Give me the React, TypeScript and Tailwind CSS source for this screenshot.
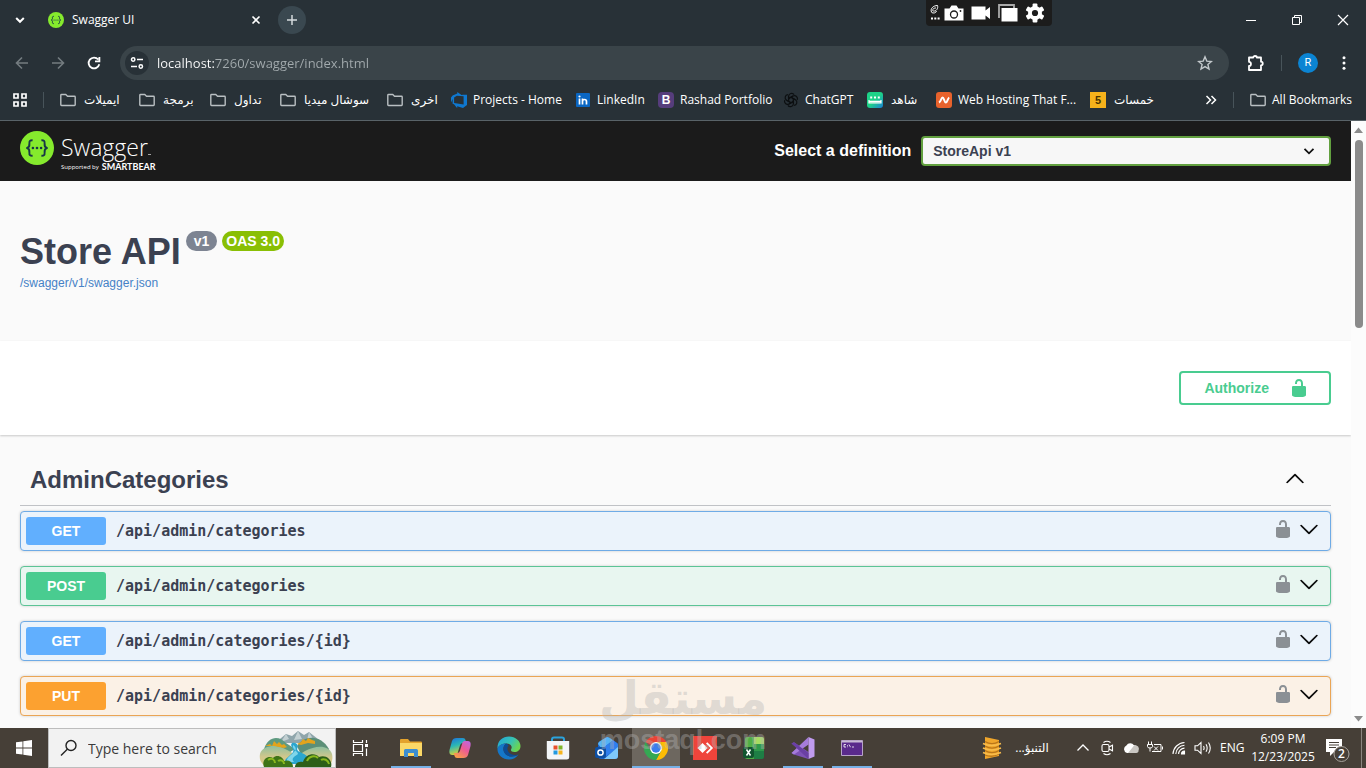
import React from "react";

const UNLOCKED =
  "M15.8 8H14V5.6C14 2.703 12.665 1 10 1 7.334 1 6 2.703 6 5.6V6h2v-.801C8 3.754 8.797 3 10 3c1.203 0 2 .754 2 2.199V8H4c-.553 0-1 .646-1 1.199V17c0 .549.428 1.139.951 1.307l1.197.387C5.672 18.861 6.55 19 7.1 19h5.8c.549 0 1.428-.139 1.951-.307l1.196-.387c.524-.167.953-.757.953-1.306V9.199C17 8.646 16.352 8 15.8 8z";
const ARROW_UP =
  "M17.418 14.908C17.69 15.176 18.127 15.176 18.397 14.908 18.667 14.64 18.668 14.207 18.397 13.939L10.489 6.109C10.219 5.841 9.782 5.841 9.51 6.109L1.602 13.939C1.332 14.207 1.332 14.64 1.602 14.908 1.873 15.176 2.311 15.176 2.581 14.908L10 7.767 17.418 14.908Z";
const ARROW_DOWN =
  "M17.418 6.109C17.69 5.841 18.127 5.841 18.397 6.109 18.667 6.377 18.668 6.81 18.397 7.078L10.489 14.908C10.219 15.176 9.782 15.176 9.51 14.908L1.602 7.078C1.332 6.81 1.332 6.377 1.602 6.109 1.873 5.841 2.311 5.841 2.581 6.109L10 13.25 17.418 6.109Z";

function Unlock() {
  return (
    <svg viewBox="0 0 20 20" className="size-5" fill="currentColor" aria-hidden="true">
      <path d={UNLOCKED} />
    </svg>
  );
}

function Arrow({ d }: { d: string }) {
  return (
    <svg viewBox="0 0 20 20" className="size-5" fill="#000" stroke="#000" strokeWidth="0.2" aria-hidden="true">
      <path d={d} />
    </svg>
  );
}

/* ---------- browser chrome ---------- */

function SwaggerMark({ className }: { className: string }) {
  return (
    <svg viewBox="0 0 34 34" className={className} aria-hidden="true">
      <circle cx="17" cy="17" r="17" fill="#85ea2d" />
      <g fill="none" stroke="#173647" strokeWidth="1.9" strokeLinejoin="round">
        <path d="M12.6 9.3c-2.6-.1-3.4.6-3.2 3.2.2 2.6 0 3.9-2.4 4.5 2.4.6 2.6 1.9 2.4 4.5-.2 2.6.6 3.3 3.2 3.2" />
        <path d="M21.4 9.3c2.6-.1 3.4.6 3.2 3.2-.2 2.6 0 3.9 2.4 4.5-2.4.6-2.6 1.9-2.4 4.5.2 2.6-.6 3.3-3.2 3.2" />
      </g>
      <g fill="#173647">
        <circle cx="12.9" cy="17" r="1.300" />
        <circle cx="17" cy="17" r="1.300" />
        <circle cx="21.1" cy="17" r="1.300" />
      </g>
    </svg>
  );
}

function TabStrip() {
  return (
    <div className="flex h-10 items-center pl-3 text-white">
      <button aria-label="Search tabs" className="flex size-4 items-center justify-center">
        <svg viewBox="0 0 16 16" className="size-4" fill="none" stroke="currentColor" strokeWidth="2">
          <path d="M4.200 6l3.800 3.800L11.800 6" />
        </svg>
      </button>
      <div className="ml-5 flex w-[216px] items-center">
        <SwaggerMark className="size-4" />
        <span className="ml-2 flex-1 text-[12px] leading-4">Swagger UI</span>
        <button aria-label="Close tab" className="flex size-4 items-center justify-center">
          <svg viewBox="0 0 16 16" className="size-4" fill="none" stroke="currentColor" strokeWidth="1.600">
            <path d="M4.500 4.500l7 7M11.500 4.500l-7 7" />
          </svg>
        </button>
      </div>
      <button aria-label="New tab" className="ml-[14px] flex size-7 items-center justify-center rounded-full bg-[#3a4850] text-[#d5dadd]">
        <svg viewBox="0 0 16 16" className="size-4" fill="none" stroke="currentColor" strokeWidth="1.500">
          <path d="M8 3v10M3 8h10" />
        </svg>
      </button>
      <div className="ml-auto flex">
        <button aria-label="Minimize" className="flex w-[46px] items-center justify-center">
          <svg viewBox="0 0 12 12" className="size-3" stroke="currentColor" fill="none">
            <path d="M1 6.500h10" />
          </svg>
        </button>
        <button aria-label="Restore" className="flex w-[46px] items-center justify-center">
          <svg viewBox="0 0 12 12" className="size-3" stroke="currentColor" fill="none">
            <path d="M1.500 3.500h7v7h-7zM3.500 3.500v-2h7v7h-2" />
          </svg>
        </button>
        <button aria-label="Close" className="flex w-[46px] items-center justify-center">
          <svg viewBox="0 0 12 12" className="size-3" stroke="currentColor" strokeWidth="1.200" fill="none">
            <path d="M1 1l10 10M11 1L1 11" />
          </svg>
        </button>
      </div>
    </div>
  );
}

function CaptureBar() {
  return (
    <div className="absolute top-0 right-[314px] flex h-[26px] w-[126px] items-center rounded-b-sm bg-[#1c1c1c] pl-1 text-white">
      <svg viewBox="0 0 10 18" className="h-[18px] w-[10px]" fill="none" stroke="currentColor">
        <path d="M1.500 8C0 5 3 1.500 7.500 1.500c1 3-1.500 6-4 5.500S4 3.500 6 4M1.500 8.500c2 1 4.500.5 5-1.500" />
        <path d="M1 14.500h2M4.300 14.500h2M7.600 14.500h2" strokeWidth="1.800" />
      </svg>
      <svg viewBox="0 0 20 16" className="ml-1 h-4 w-5" fill="#fff">
        <path d="M.5 3.500h5L7.500.5h5l2 3h5v12H.5z" />
        <circle cx="10" cy="9.500" r="3.500" fill="none" stroke="#1c1c1c" strokeWidth="1.300" />
        <circle cx="16.500" cy="6" r=".9" fill="#1c1c1c" />
      </svg>
      <svg viewBox="0 0 20 14" className="ml-[7px] h-[14px] w-5" fill="#fff">
        <path d="M.5.500h14v4l4.500-3.500v12L14.500 9.500v4H.5z" />
      </svg>
      <svg viewBox="0 0 20 18" className="ml-[7px] h-[18px] w-5">
        <path d="M1 14V1h15v3" fill="none" stroke="#aaa" strokeWidth="1.800" />
        <path d="M3.500 4h16V17.500h-16z" fill="#fff" />
      </svg>
      <svg viewBox="0 0 20 20" className="ml-[7px] size-5">
        <g fill="#fff">
          <circle cx="10" cy="10" r="7" />
          <rect x="7.600" y=".5" width="4.800" height="19" rx="1" />
          <rect x="7.600" y=".5" width="4.800" height="19" rx="1" transform="rotate(60 10 10)" />
          <rect x="7.600" y=".5" width="4.800" height="19" rx="1" transform="rotate(120 10 10)" />
        </g>
        <circle cx="10" cy="10" r="3.100" fill="#1c1c1c" />
      </svg>
    </div>
  );
}

function Toolbar() {
  return (
    <div className="mt-[6px] flex h-[34px] items-center pl-3 text-white">
      <button aria-label="Back" className="flex size-5 items-center justify-center text-[#747c80]">
        <svg viewBox="0 0 16 16" className="size-4" fill="none" stroke="currentColor" strokeWidth="1.600">
          <path d="M14 8H2.500M8 2.500L2.500 8 8 13.500" />
        </svg>
      </button>
      <button aria-label="Forward" className="ml-4 flex size-5 items-center justify-center text-[#747c80]">
        <svg viewBox="0 0 16 16" className="size-4" fill="none" stroke="currentColor" strokeWidth="1.600">
          <path d="M2 8h11.500M8 2.500L13.500 8 8 13.500" />
        </svg>
      </button>
      <button aria-label="Reload" className="ml-4 flex size-5 items-center justify-center">
        <svg viewBox="0 0 16 16" className="size-4" fill="none" stroke="currentColor" strokeWidth="1.800">
          <path d="M13.300 9.300A5.400 5.400 0 1 1 12.200 4.500M13.400 2v4.400H9" />
        </svg>
      </button>
      <div className="ml-4 flex h-[34px] flex-1 items-center rounded-full bg-[#3a4449] pr-4 pl-[5px]">
        <button aria-label="Site information" className="flex size-6 items-center justify-center rounded-full bg-[#283137]">
          <svg viewBox="0 0 16 16" className="size-4" fill="none" stroke="#fff" strokeWidth="1.500">
            <circle cx="4.200" cy="4.500" r="1.700" />
            <path d="M8 4.500h6M2 11.500h6" />
            <circle cx="11.800" cy="11.500" r="1.700" />
          </svg>
        </button>
        <input
          aria-label="Address"
          defaultValue="localhost:7260/swagger/index.html"
          className="ml-2 h-6 flex-1 bg-[linear-gradient(90deg,#fff_58px,#a3abae_58px)] bg-clip-text text-[13px] text-transparent outline-none"
        />
        <button aria-label="Bookmark this tab" className="text-[#c3c9cc]">
          <svg viewBox="0 0 16 16" className="size-4" fill="none" stroke="currentColor" strokeWidth="1.400">
            <path d="M8 1.800l1.800 4.300 4.600.4-3.500 3 1.100 4.500L8 11.600 4 14l1.100-4.500-3.500-3 4.600-.4z" />
          </svg>
        </button>
      </div>
      <button aria-label="Extensions" className="ml-[18px]">
        <svg viewBox="0 0 18 18" className="size-[18px]" fill="none" stroke="currentColor" strokeWidth="1.800" strokeLinejoin="round">
          <path d="M2 3.500h4.200c0-2 3.600-2 3.600 0H14v4.200c2.300 0 2.300 3.600 0 3.600v4.700H2v-4c2.600 0 2.600-4.200 0-4.200z" />
        </svg>
      </button>
      <span className="ml-4 h-4 w-px bg-[#48545a]" />
      <button className="ml-4 flex size-5 items-center justify-center rounded-full bg-[#0b84d3] font-['Roboto',sans-serif] text-[11px]">R</button>
      <button aria-label="Menu" className="mr-[14px] ml-[18px]">
        <svg viewBox="0 0 16 16" className="size-4" fill="currentColor">
          <circle cx="8" cy="2.800" r="1.500" />
          <circle cx="8" cy="8" r="1.500" />
          <circle cx="8" cy="13.200" r="1.500" />
        </svg>
      </button>
    </div>
  );
}

function Folder() {
  return (
    <svg viewBox="0 0 16 16" className="size-4 shrink-0" fill="none" stroke="#b9bfc2" strokeWidth="1.400" strokeLinejoin="round">
      <path d="M.8 3.200q0-.7.7-.7h4.300l1.700 1.700h7q.7 0 .7.700v7.900q0 .7-.7.700h-13q-.7 0-.7-.7z" />
    </svg>
  );
}

function ChatGpt() {
  return (
    <svg viewBox="0 0 16 16" className="size-4 shrink-0" fill="none" stroke="#0c0f11" strokeWidth="1.200">
      {[0, 60, 120, 180, 240, 300].map((a) => (
        <path key={a} transform={`rotate(${a} 8 8)`} d="M5.600 9.400V4.300a3 3 0 0 1 5.500-1.600M5.600 6.600L10 4" />
      ))}
    </svg>
  );
}

const bookmarks: { label: string; width: string; gap: string; rtl?: boolean; icon: React.ReactNode }[] = [
  { label: "ايميلات", width: "w-[79px]", gap: "gap-2", rtl: true, icon: <Folder /> },
  { label: "برمجة", width: "w-[71px]", gap: "gap-2", rtl: true, icon: <Folder /> },
  { label: "تداول", width: "w-[70px]", gap: "gap-2", rtl: true, icon: <Folder /> },
  { label: "سوشال ميديا", width: "w-[107px]", gap: "gap-2", rtl: true, icon: <Folder /> },
  { label: "اخرى", width: "w-[64px]", gap: "gap-2", rtl: true, icon: <Folder /> },
  {
    label: "Projects - Home",
    width: "w-[124px]",
    gap: "gap-[6px]",
    icon: (
      <svg viewBox="0 0 16 16" className="size-4 shrink-0" fill="#0f78d0">
        <path
          fillRule="evenodd"
          d="M16 2.700v10.200L12 16l-5.800-1.800v2L3 12.200 1.600 11.800V7L0 10.500V5.400l1.600-2L6.300 1.600V0L10.500 2.900 12 2.800zM12.600 4.300L5.900 3.800 3.100 5.600v5.500l9.500 1.500z"
        />
      </svg>
    ),
  },
  {
    label: "LinkedIn",
    width: "w-[83px]",
    gap: "gap-[6px]",
    icon: (
      <svg viewBox="0 0 16 16" className="size-4 shrink-0">
        <rect x="1" y="1" width="14" height="14" rx="1" fill="#0a66c2" />
        <circle cx="4.500" cy="4.500" r="1.100" fill="#fff" />
        <path d="M4.500 6.500v6M7.500 6.500v6M7.500 9.500c0-2.700 4-2.700 4 0v3" fill="none" stroke="#fff" strokeWidth="1.700" />
      </svg>
    ),
  },
  {
    label: "Rashad Portfolio",
    width: "w-[125px]",
    gap: "gap-[6px]",
    icon: (
      <span className="flex size-4 shrink-0 items-center justify-center rounded-sm bg-[#563d7c] font-['Liberation_Sans',sans-serif] text-[12px] font-bold">
        B
      </span>
    ),
  },
  { label: "ChatGPT", width: "w-[84px]", gap: "gap-[6px]", icon: <ChatGpt /> },
  {
    label: "شاهد",
    width: "w-[69px]",
    gap: "gap-2",
    rtl: true,
    icon: (
      <svg viewBox="0 0 16 16" className="size-4 shrink-0">
        <defs>
          <linearGradient id="shahid" x1="0" y1="0" x2="1" y2="1">
            <stop offset="0.500" stopColor="#1dd288" />
            <stop offset="1" stopColor="#1a7fd8" />
          </linearGradient>
        </defs>
        <rect width="16" height="16" rx="3" fill="url(#shahid)" />
        <path d="M2 8v2.800h12V8M2 9.300h12" fill="none" stroke="#fff" strokeWidth="1.200" />
        <path d="M3.200 5.500h2M7 5.500h2M10.800 5.500h2" stroke="#fff" strokeWidth="1.800" />
      </svg>
    ),
  },
  {
    label: "Web Hosting That F...",
    width: "w-[154px]",
    gap: "gap-[6px]",
    icon: (
      <svg viewBox="0 0 16 16" className="size-4 shrink-0">
        <rect width="16" height="16" rx="3" fill="#e8622c" />
        <path d="M3 10.500c2-1 2.200-5 3.600-5s1.700 5 3.200 5 1.700-4 3.400-5" fill="none" stroke="#fff" strokeWidth="2" />
      </svg>
    ),
  },
  {
    label: "خمسات",
    width: "w-[66px]",
    gap: "gap-2",
    rtl: true,
    icon: (
      <span className="flex size-4 shrink-0 items-center justify-center bg-[#f6b21b] font-['Liberation_Sans',sans-serif] text-[11px] font-bold text-[#4a3500]">
        5
      </span>
    ),
  },
];

function Bookmarks() {
  return (
    <nav aria-label="Bookmarks" className="flex h-10 items-center pl-3 text-[12px] text-white">
      <button aria-label="Apps" className="shrink-0">
        <svg viewBox="0 0 16 16" className="size-4" fill="none" stroke="currentColor" strokeWidth="1.700">
          <path d="M2 2h4v4H2zM10 2h4v4h-4zM2 10h4v4H2zM10 10h4v4h-4z" />
        </svg>
      </button>
      <span className="mr-4 ml-[15px] h-4 w-px shrink-0 bg-[#48545a]" />
      {bookmarks.map((b) => (
        <a key={b.label} href="#" className={`flex shrink-0 items-center whitespace-nowrap ${b.gap} ${b.width}`}>
          {b.icon}
          <span dir={b.rtl ? "rtl" : "ltr"}>{b.label}</span>
        </a>
      ))}
      <button aria-label="More bookmarks" className="ml-auto">
        <svg viewBox="0 0 12 12" className="size-3" fill="none" stroke="currentColor" strokeWidth="1.500">
          <path d="M1.500 2l4 4-4 4M6.500 2l4 4-4 4" />
        </svg>
      </button>
      <span className="mx-4 h-4 w-px bg-[#48545a]" />
      <a href="#" className="mr-[14px] flex items-center gap-[6px] whitespace-nowrap">
        <Folder />
        All Bookmarks
      </a>
    </nav>
  );
}

/* ---------- Swagger page ---------- */

type Method = "GET" | "POST" | "PUT";
const tones: Record<Method, { row: string; badge: string }> = {
  GET: { row: "border-[#6fabe6] bg-[#ebf3fb]", badge: "bg-[#61affe]" },
  POST: { row: "border-[#5cc496] bg-[#e8f6f0]", badge: "bg-[#49cc90]" },
  PUT: { row: "border-[#eaa555] bg-[#fbf1e6]", badge: "bg-[#fca130]" },
};
const operations: { method: Method; path: string }[] = [
  { method: "GET", path: "/api/admin/categories" },
  { method: "POST", path: "/api/admin/categories" },
  { method: "GET", path: "/api/admin/categories/{id}" },
  { method: "PUT", path: "/api/admin/categories/{id}" },
];

function Operation({ method, path }: { method: Method; path: string }) {
  const tone = tones[method];
  return (
    <div className={`flex h-10 items-center rounded border px-[5px] shadow-[0_0_3px_rgba(0,0,0,0.19)] ${tone.row}`}>
      <span className={`w-20 rounded-[3px] text-center text-[14px] leading-7 font-bold text-white ${tone.badge}`}>{method}</span>
      <a href="#" className="ml-[10px] flex-1 font-['DejaVu_Sans_Mono',monospace] text-[15px] leading-5 font-bold">
        {path}
      </a>
      <button aria-label="Authorization" className="mb-1 text-[#8b9095]">
        <Unlock />
      </button>
      <button aria-label="Expand operation" className="mr-[6px] mb-1 ml-[6px]">
        <Arrow d={ARROW_DOWN} />
      </button>
    </div>
  );
}

function SwaggerPage() {
  return (
    <main className="min-w-0 flex-1 overflow-hidden bg-[#fafafa] font-['Liberation_Sans',Arial,sans-serif] text-[#3b4151]">
      <header className="flex h-[60px] items-center justify-between bg-[#1b1b1b] px-5">
        <a href="#" className="flex items-start gap-[7px] font-['Open_Sans',sans-serif] text-white">
          <SwaggerMark className="mb-[6px] size-[34px]" />
          <span className="flex flex-col">
            <span className="flex items-end text-[23px] leading-8 font-light">
              Swagger
              <span className="mb-2 h-px w-[3px] bg-white/60" />
            </span>
            <span className="flex items-center gap-[3px] text-[6px] leading-[8px]">
              <span>Supported by</span>
              <span className="font-['Lato',sans-serif] text-[9px] font-bold">SMARTBEAR</span>
            </span>
          </span>
        </a>
        <div className="flex items-center gap-[10px]">
          <label htmlFor="definition" className="text-[16px] font-bold text-white">
            Select a definition
          </label>
          <div className="relative">
            <select
              id="definition"
              className="h-[30px] w-[30vw] appearance-none rounded border-2 border-[#62a03f] bg-[#f7f7f7] pr-10 pl-[10px] text-[14px] font-bold text-[#3b4151]"
            >
              <option>StoreApi v1</option>
            </select>
            <svg
              viewBox="0 0 12 12"
              className="pointer-events-none absolute top-[9px] right-4 size-3"
              fill="none"
              stroke="#111"
              strokeWidth="1.800"
            >
              <path d="M1.500 3.800L6 8.300l4.500-4.500" />
            </svg>
          </div>
        </div>
      </header>

      <section className="h-[160px] px-5 pt-[50px]">
        <div className="flex items-start gap-[5px] text-[14px] leading-5 font-bold text-white">
          <h1 className="text-[36px] leading-[42px] text-[#3b4151]">Store API</h1>
          <span className="rounded-full bg-[#7d8492] px-2">v1</span>
          <span className="rounded-full bg-[#89bf04] px-1">OAS 3.0</span>
        </div>
        <a href="#" className="mt-[2px] block text-[12px] leading-4 text-[#4581c6]">
          /swagger/v1/swagger.json
        </a>
      </section>

      <section className="flex justify-end bg-white px-5 py-[30px] shadow-[0_1px_2px_rgba(0,0,0,0.2)]">
        <button className="flex h-[34px] items-center gap-5 rounded border-2 border-[#49cc90] pr-5 pl-[23px] text-[14px] font-bold text-[#49cc90]">
          Authorize
          <Unlock />
        </button>
      </section>

      <section className="px-5 pt-[19px]">
        <h2 className="flex h-[52px] items-center justify-between border-b border-[#3b4151]/30 pr-[26px] pl-[10px] text-[24px] font-bold">
          AdminCategories
          <button aria-label="Collapse section" className="mb-1">
            <Arrow d={ARROW_UP} />
          </button>
        </h2>
        <div className="mt-[5px] flex flex-col gap-[15px]">
          {operations.map((o, i) => (
            <Operation key={i} {...o} />
          ))}
        </div>
      </section>
    </main>
  );
}

function Scrollbar() {
  return (
    <div className="flex w-[15px] flex-col items-center justify-between bg-[#fcfcfc] py-[5px]">
      <div className="flex flex-col items-center gap-[6px]">
        <svg viewBox="0 0 9 8" className="h-2 w-[9px]" fill="#8b8b8b">
          <path d="M4.500 1.500L9 7H0z" />
        </svg>
        <div className="h-[188px] w-2 rounded-full bg-[#8b8b8b]" />
      </div>
      <svg viewBox="0 0 9 8" className="h-2 w-[9px]" fill="#8b8b8b">
        <path d="M4.500 6.500L9 1H0z" />
      </svg>
    </div>
  );
}

/* ---------- taskbar ---------- */

function Landscape() {
  return (
    <svg viewBox="0 0 74 38" className="h-[38px] w-[74px]" aria-hidden="true">
      <defs>
        <linearGradient id="hill" x1="0" y1="0" x2="0" y2="1">
          <stop offset="0" stopColor="#8fbf9f" />
          <stop offset=".5" stopColor="#cfc78c" />
          <stop offset="1" stopColor="#e3c887" />
        </linearGradient>
      </defs>
      <path d="M16 14L27 5l6 2 6-5 6 4 5-3 14 11z" fill="#8fa5ab" />
      <path d="M27 5l3 5-8 3zM39 2l4 8-8 1zM50 3l4 7-6 1z" fill="#c3d0d2" />
      <path d="M5 20C9 7 20 6 27 14l9 6-16 10H6z" fill="#5f9a80" />
      <path d="M38 17C46 5 62 6 70 20v10H44z" fill="#5c8f78" />
      <path d="M1 25C3 17 16 15 24 19c9 4 16 8 12 13l-5 6H7C2 34 0 31 1 25z" fill="url(#hill)" />
      <path d="M73 25C69 15 56 17 46 22c-9 5-9 10-2 16h26c3-4 4-8 3-13z" fill="url(#hill)" />
      <path d="M33 14c5-1 7 3 5 6 0 4 11 4 11 10 0 3-2 5-5 5H27c-4-5 5-8 7-12 2-3-4-6-1-9z" fill="#2ba6cf" />
      <path d="M34 16c4 3 3 5 1 7-3 4-8 5-7 10h7c-4-4 2-6 4-8 0-3-6-4-5-9z" fill="#7fd6ea" />
      <path d="M6 17l5-2 2 2 2-5 3 3 2-2 3 3 2-1 3 3-3 1-10-2zM38 15l4-2 2-3 3 2 2-3 4 2 3 1 0 3-7-1-7 2z" fill="#e3a31c" />
      <path d="M5 38c-3-7 4-12 9-9 4-4 10-1 11 3 6-2 9 2 9 6z" fill="#3f7417" />
      <path d="M36 38c0-4 4-6 8-5 2-8 12-10 16-5 7-3 14 3 12 10z" fill="#2d5f18" />
      <path d="M9 31c4-3 7 0 7 3M19 32c3-2 6 0 6 3M48 32c2-5 8-6 11-3M62 31c3-2 7 0 8 4" fill="none" stroke="#8ab81e" strokeWidth="2" />
    </svg>
  );
}

const taskIcons: { name: string; state: "idle" | "open" | "active"; art: React.ReactNode }[] = [
  {
    name: "File Explorer",
    state: "open",
    art: (
      <>
        <path d="M1 4q0-1 1-1h7l2 2.500h11q1 0 1 1V20H1z" fill="#e4a32c" />
        <path d="M1 7h22v13H1z" fill="#fbd867" />
        <path d="M5 21v-6.500q0-1.500 1.500-1.500h11q1.500 0 1.500 1.500V21h-4v-4H9v4z" fill="#3d8ed0" />
      </>
    ),
  },
  {
    name: "Copilot",
    state: "idle",
    art: (
      <>
        <path d="M8.500 2H15q2 0 2.500 2l.7 3h-3.500q-2 0-2.600 2L9.500 17.500q-.6 1.500-2 1.500H4.500Q.5 19 1.500 14L4 5q1-3 4.500-3z" fill="url(#copA)" />
        <path d="M15.500 22H9q-2 0-2.500-2L5.800 17h3.500q2 0 2.600-2l2.600-8.500q.6-1.500 2-1.500h3q4 0 3 5L20 19q-1 3-4.500 3z" fill="url(#copB)" />
      </>
    ),
  },
  {
    name: "Microsoft Edge",
    state: "idle",
    art: (
      <>
        <path d="M12 .5C18.500.5 23.500 5 23.500 10c0 4-3 6-6 6-2.500 0-4-1-3.500-2.500 2-3-.5-6-4.500-6C4.500 7.500 1 10 .5 13 0 5 5.500.5 12 .5z" fill="url(#edgeB)" />
        <path d="M.5 13C1 9.500 5 7.500 9.500 7.500c-2 1-3.500 3.500-3 6.500.6 4 4.500 6.500 8.500 6.500 2.500 0 5-.8 6.500-2C19.500 21.500 16 23.500 12 23.500 5.500 23.500.2 18.500.5 13z" fill="#1577c8" />
        <path d="M9.500 7.500c-2 1-3.500 3.500-3 6.500.6 4 4.500 6.500 8.500 6.500 2.500 0 5-.8 6.500-2-5 1.500-10-.5-11-5-.3-1.500.2-3 1.200-3.800-.5-1-1.200-1.700-2.200-2.200z" fill="#0c4c95" />
      </>
    ),
  },
  {
    name: "Microsoft Store",
    state: "idle",
    art: (
      <>
        <path d="M6 6V3.500Q6 1.500 8 1.500h8q2 0 2 2V6" fill="none" stroke="#2ba3dc" strokeWidth="2" />
        <path d="M.8 5h22.400v16q0 2.500-2.500 2.500H3.300Q.8 23.500.8 21z" fill="#f3f5f7" />
        <path d="M7.500 9.500h4v4h-4z" fill="#e8502a" />
        <path d="M12.500 9.500h4v4h-4z" fill="#7fb529" />
        <path d="M7.500 14.500h4v4h-4z" fill="#2199e0" />
        <path d="M12.500 14.500h4v4h-4z" fill="#f6b51e" />
      </>
    ),
  },
  {
    name: "Outlook",
    state: "idle",
    art: (
      <>
        <path d="M3 8q0-1.500 1.500-2.500L11 1.500q1.500-1 3 0L22 7q1 .7 1 2v11q0 3-3 3H6q-3 0-3-3z" fill="#1a5fc5" />
        <path d="M3 8q0-1.500 1.500-2.500L11 1.500q1.500-1 3 0l4 2.700L7 13z" fill="#56b3f5" />
        <path d="M18 4.200L22 7q1 .7 1 2v3L10 21H6q-3 0-3-3v-2z" fill="#2f7fee" />
        <path d="M23 11v9q0 3-3 3H9z" fill="#7fc9fb" />
        <rect x="0" y="11" width="11" height="11" rx="2" fill="#0d4fa3" />
        <circle cx="5.500" cy="16.500" r="2.600" fill="none" stroke="#fff" strokeWidth="1.500" />
      </>
    ),
  },
  {
    name: "Google Chrome",
    state: "active",
    art: (
      <>
        <path d="M12 12L1.600 6A12 12 0 0 1 22.400 6z" fill="#ea4335" />
        <path d="M12 12V6h10.400A12 12 0 0 1 12 24l5-9z" fill="#fbbc05" />
        <path d="M12 12l5 3-5 9A12 12 0 0 1 1.600 6l5.200 9z" fill="#34a853" />
        <circle cx="12" cy="12" r="6" fill="#fff" />
        <circle cx="12" cy="12" r="4.700" fill="#3b7ded" />
      </>
    ),
  },
  {
    name: "AnyDesk",
    state: "idle",
    art: (
      <>
        <path d="M0 0h24v24H0z" fill="#ef443b" />
        <path d="M4.500 12L9.500 7l5 5-5 5z" fill="#fff" />
        <path d="M13 7.500l1.300-1.300 5.800 5.800-5.800 5.800L13 16.500l4.500-4.500z" fill="#fff" />
      </>
    ),
  },
  {
    name: "Excel",
    state: "idle",
    art: (
      <>
        <path d="M3 3q0-2 2-2h7v22H5q-2 0-2-2z" fill="#4fae45" />
        <path d="M12 1h8q2 0 2 2v5H12z" fill="#a6dd62" />
        <path d="M12 8h10v13q0 2-2 2h-8z" fill="#1e7e45" />
        <path d="M12 8h10v7H12z" fill="#2f9a4b" />
        <rect x="1" y="11" width="11" height="11" rx="2" fill="#12552f" />
        <path d="M4.500 13.500l4 6M8.500 13.500l-4 6" stroke="#fff" strokeWidth="1.500" />
      </>
    ),
  },
  {
    name: "Visual Studio",
    state: "open",
    art: (
      <>
        <path d="M.5 7.500L3 6.200 17.500 16v7L2.800 18.500.5 17l6-5z" fill="#7d52b5" />
        <path d="M.5 17L17.500 1v7.500L3 18.500z" fill="#a67cdb" />
        <path d="M17.500 1L23.500 3.500v17L17.500 23z" fill="#c09bee" />
        <path d="M3 6.200L17.500 17v6L.5 7.500z" fill="#6a3fa4" />
      </>
    ),
  },
  {
    name: "Command Prompt",
    state: "open",
    art: (
      <>
        <path d="M1.500 4.500h21v15h-21z" fill="#5a2a8c" stroke="#b7a3c8" />
        <path d="M2 5h20v1.500H2z" fill="#c9bbd6" />
        <path d="M6 8.500H4v2.500h2M7.500 9v.8M7.500 10.500v.7M9 8.500l1.500 2.700M12 11h2" fill="none" stroke="#fff" strokeWidth=".8" />
      </>
    ),
  },
];

const underline = {
  idle: "",
  open: "after:absolute after:inset-x-1 after:bottom-0 after:h-[2px] after:bg-[#76b0e6]",
  active: "bg-[#6d675f] after:absolute after:inset-x-0 after:bottom-0 after:h-[2px] after:bg-[#76b0e6]",
};

function Taskbar() {
  return (
    <footer className="flex h-10 shrink-0 bg-[#463f37] text-white">
      <svg className="absolute size-0" aria-hidden="true">
        <defs>
          <linearGradient id="copA" x1="0" y1="0" x2="0.300" y2="1">
            <stop offset="0" stopColor="#1b6fe0" />
            <stop offset=".5" stopColor="#2bb8b4" />
            <stop offset="1" stopColor="#d8d33a" />
          </linearGradient>
          <linearGradient id="copB" x1="1" y1="0" x2="0.300" y2="1">
            <stop offset="0" stopColor="#b968e8" />
            <stop offset=".5" stopColor="#ec5a96" />
            <stop offset="1" stopColor="#f89c4a" />
          </linearGradient>
          <linearGradient id="edgeB" x1="0" y1="0" x2="1" y2="0.500">
            <stop offset="0" stopColor="#1fa4dc" />
            <stop offset=".6" stopColor="#37c2b4" />
            <stop offset="1" stopColor="#6bd552" />
          </linearGradient>
        </defs>
      </svg>
      <button aria-label="Start" className="flex w-12 items-center justify-center">
        <svg viewBox="0 0 16 16" className="size-4" fill="#fff">
          <path d="M0 2.300L6.500 1.400v6.200H0zM7.300 1.300L16 0v7.600H7.300zM0 8.400h6.500v6.200L0 13.700zM7.300 8.400H16V16l-8.700-1.300z" />
        </svg>
      </button>
      <label className="flex w-72 items-center border border-[#bdbdbd] bg-[#f2f2f2] pr-[2px] pl-[11px]">
        <svg viewBox="0 0 18 18" className="size-[18px]" fill="none" stroke="#222" strokeWidth="1.400">
          <circle cx="11" cy="6.500" r="5" />
          <path d="M7.300 10.200L1 16.500" />
        </svg>
        <input
          aria-label="Search"
          placeholder="Type here to search"
          className="ml-[10px] w-[160px] text-[14px] text-[#333] placeholder-[#3b3b3b] outline-none"
        />
        <span className="ml-auto">
          <Landscape />
        </span>
      </label>
      <button aria-label="Task view" className="flex w-12 items-center justify-center">
        <svg viewBox="0 0 16 16" className="size-4" fill="none" stroke="#fff" strokeWidth="1.200">
          <path d="M1.500 0v2.500h9V0M1.500 4.500h9v7h-9zM1.500 16v-2.500h9V16M14.500 0v3M14.500 8.500V16" />
          <path d="M13 4h3v3h-3z" fill="#fff" stroke="none" />
        </svg>
      </button>
      <div className="ml-[3px] flex gap-px">
        {taskIcons.map((t) => (
          <button key={t.name} aria-label={t.name} className={`relative flex w-12 items-center justify-center ${underline[t.state]}`}>
            <svg viewBox="0 0 24 24" className="size-6">
              {t.art}
            </svg>
          </button>
        ))}
      </div>

      <div className="ml-auto flex items-center">
        <button className="flex items-center gap-2">
          <svg viewBox="0 0 24 24" className="size-6">
            <path d="M5 1l14 3v16L5 23z" fill="#f0a62b" />
            <path d="M5 5.500c5 3 9 3 14 0M5 10c5 3 9 3 14 0M5 14.500c5 3 9 3 14 0M5 19c5 2 9 2 14-1" fill="none" stroke="#b9761a" strokeWidth="1.300" />
            <path d="M3 7.500c6 3 12 2.500 18 0M3 12c6 3 12 2.500 18 0M3 16.500c6 3 12 2.500 18 0" fill="none" stroke="#f8bd4d" strokeWidth="1.500" />
          </svg>
          <span dir="rtl" className="w-10 text-[12px] whitespace-nowrap">
            التنبؤ...
          </span>
        </button>
        <button aria-label="Show hidden icons" className="ml-6">
          <svg viewBox="0 0 14 14" className="size-[14px]" fill="none" stroke="#fff" strokeWidth="1.300">
            <path d="M1.500 9.500L7 4l5.500 5.500" />
          </svg>
        </button>
        <button aria-label="Meet now" className="ml-[9px]">
          <svg viewBox="0 0 16 16" className="size-4" fill="none" stroke="#fff" strokeWidth="1.100">
            <rect x="3" y="4.500" width="7" height="7" rx="1.500" />
            <path d="M10 7l3.500-1.800v5.600L10 9M4.500 2.500Q8 0 11.500 2.500M4.500 13.500Q8 16 11.500 13.500" />
          </svg>
        </button>
        <button aria-label="OneDrive" className="ml-2">
          <svg viewBox="0 0 16 16" className="size-4">
            <path d="M4 13a4 4 0 0 1-.6-7.500A4.500 4.500 0 0 1 11 5.200 4 4 0 0 1 12.500 13z" fill="#fff" />
            <path d="M9.500 7.500a3 3 0 0 1 6 2.500c.5 2-.8 3-3 3H5z" fill="#c9c6c2" />
          </svg>
        </button>
        <button aria-label="Battery" className="ml-2">
          <svg viewBox="0 0 16 16" className="size-4" fill="none" stroke="#fff" strokeWidth="1">
            <path d="M1.500 1.500v3M4.500 1.500v3M.5 4.500h5v2q0 1.500-2.500 1.500T.5 6.500zM3 8v3.500" />
            <path d="M7 4.500h7v7H5M15.500 6.500v3M7 6.500l4 4M11 6.500l-4 4" />
          </svg>
        </button>
        <button aria-label="Network" className="ml-2">
          <svg viewBox="0 0 16 16" className="size-4" fill="none" stroke="#fff" strokeWidth="1.100">
            <path d="M2 14A12 12 0 0 1 13.500 2.500M4.800 14A9 9 0 0 1 13.500 5.300M7.600 14a6 6 0 0 1 5.900-5.900" />
            <path d="M10.500 14a3 3 0 0 1 3-3v3z" fill="#fff" />
          </svg>
        </button>
        <button aria-label="Volume" className="ml-[7px]">
          <svg viewBox="0 0 18 16" className="h-4 w-[18px]" fill="none" stroke="#fff" strokeWidth="1.100">
            <path d="M1 5.800h2.500L7 2.500v11L3.500 10.200H1zM9.500 6q1.200 2 0 4M12 4.300q2.300 3.700 0 7.400M14.500 2.500q3.500 5.500 0 11" />
          </svg>
        </button>
        <button className="ml-2 w-6 text-[12px]">ENG</button>
        <div className="ml-1 w-[70px] text-center text-[12px] leading-[18px]">
          <div>6:09 PM</div>
          <div>12/23/2025</div>
        </div>
        <button aria-label="Notifications" className="relative ml-[7px] h-7 w-7">
          <svg viewBox="0 0 28 28" className="size-7">
            <path d="M1 5h16v13H9l-4 4v-4H1z" fill="#fff" />
            <path d="M4 8.500h10M4 11h10M4 13.500h7" stroke="#463f37" strokeWidth="1" />
            <circle cx="16.500" cy="20" r="7.500" fill="#463f37" stroke="#a8a39d" />
          </svg>
          <span className="absolute top-3 left-[13px] text-[12px] leading-4 font-semibold">2</span>
        </button>
        <span className="mr-1 ml-2 h-10 w-px bg-[#8a857f]" />
      </div>
    </footer>
  );
}

function Watermark() {
  return (
    <div aria-hidden="true" className="pointer-events-none absolute bottom-3 left-1/2 flex -translate-x-1/2 flex-col items-center font-bold text-[#b4b4b4]/40">
      <span dir="rtl" className="font-['DejaVu_Sans',sans-serif] text-[46px] leading-[52px] whitespace-nowrap">
        مستقل
      </span>
      <span className="font-['Liberation_Sans',sans-serif] text-[27px] leading-8">mostaql.com</span>
    </div>
  );
}

export default function App() {
  return (
    <div className="relative flex h-screen flex-col overflow-hidden bg-[#283137] font-['Open_Sans','DejaVu_Sans',sans-serif]">
      <div className="shrink-0 border-b border-[#596368]">
        <TabStrip />
        <Toolbar />
        <Bookmarks />
      </div>
      <CaptureBar />
      <div className="flex min-h-0 flex-1">
        <SwaggerPage />
        <Scrollbar />
      </div>
      <Taskbar />
      <Watermark />
    </div>
  );
}
